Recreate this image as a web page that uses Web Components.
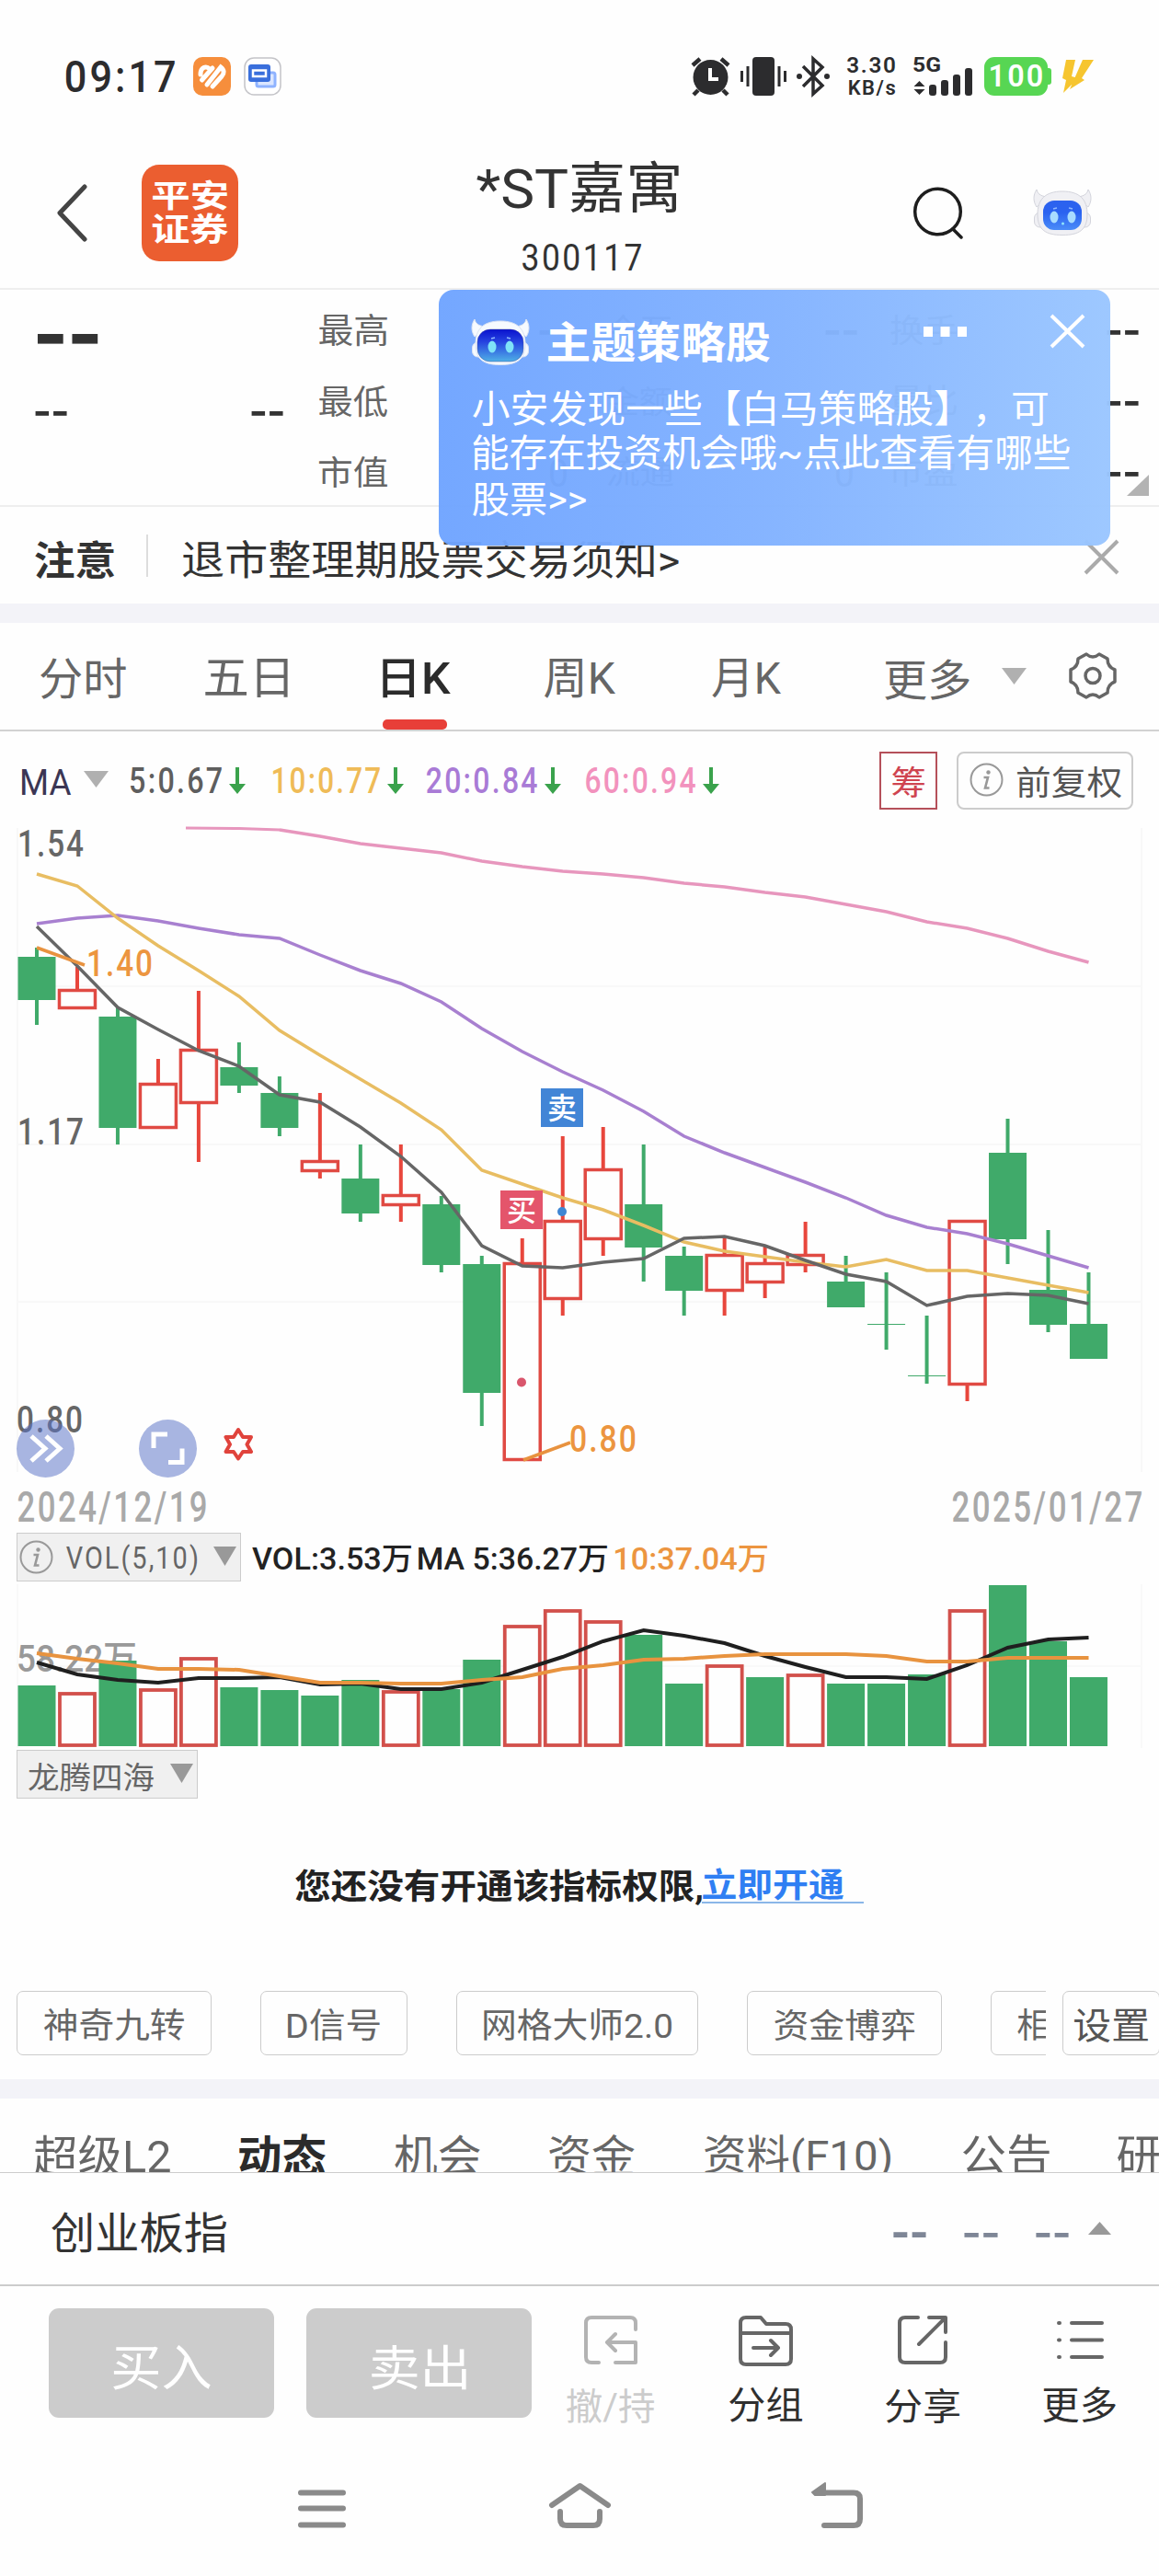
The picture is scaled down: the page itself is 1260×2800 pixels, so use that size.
<!DOCTYPE html>
<html lang="zh-CN">
<head>
<meta charset="utf-8">
<title>*ST嘉寓 300117</title>
<style>
  body {
    margin: 0;
    background: #fefefe;
    color: #333;
    font-family: Roboto, "Noto Sans CJK SC", sans-serif;
  }
</style>
</head>
<body>
<stock-page></stock-page>

<script>
// Base class: renders markup and styles into an open shadow root
class BaseElement extends HTMLElement {
  constructor() {
    super();
    this.attachShadow({ mode: 'open' });
  }

  connectedCallback() {
    this.shadowRoot.innerHTML = `
      <style>
        :host { display: block; box-sizing: border-box; }
        svg { display: block; flex: none; overflow: visible; }
        ${this.styles()}
      </style>
      ${this.markup()}
    `;
  }

  styles() { return ''; }
  markup() { return ''; }
}

// Text scaled so that its ink fills a box of w x h
const measureCtx = document.createElement('canvas').getContext('2d');

class FitText extends HTMLElement {
  constructor() {
    super();
    this.attachShadow({ mode: 'open' });
  }

  connectedCallback() {
    const w = Number(this.getAttribute('w'));
    const h = Number(this.getAttribute('h'));
    const cs = getComputedStyle(this);
    const text = this.textContent.trim();
    // Latin digits are set a little open
    const spacing = /^[\w:.,/()]+$/.test(text) && text.length > 2 ? 0.07 : 0;

    measureCtx.font = `${cs.fontWeight} 100px ${cs.fontFamily}`;
    measureCtx.letterSpacing = `${spacing * 100}px`;
    const m = measureCtx.measureText(text);
    const k = h / (m.actualBoundingBoxAscent + m.actualBoundingBoxDescent);
    const sx = w / ((m.actualBoundingBoxLeft + m.actualBoundingBoxRight) * k);
    const fa = m.fontBoundingBoxAscent * k;
    const fd = m.fontBoundingBoxDescent * k;
    const baseline = (h - fa - fd) / 2 + fa;
    const tx = m.actualBoundingBoxLeft * k * sx;
    const ty = m.actualBoundingBoxAscent * k - baseline;

    this.shadowRoot.innerHTML = `
      <style>
        :host { display: block; flex: none; width: ${w}px; height: ${h}px; }
        span {
          display: block;
          width: max-content;
          white-space: pre;
          font-size: ${100 * k}px;
          line-height: ${h}px;
          letter-spacing: ${spacing}em;
          transform-origin: 0 0;
          transform: translate(${tx}px, ${ty}px) scaleX(${sx});
        }
      </style>
      <span><slot></slot></span>
    `;
  }
}
customElements.define('fit-text', FitText);

// Shorthand for the markup of a fitted text
const fit = (text, w, h, style = '') => `<fit-text w="${w}" h="${h}" style="${style}">${text}</fit-text>`;

class DropArrow extends BaseElement {
  styles() { return ':host { flex: none; }'; }
  markup() {
    const w = this.getAttribute('w');
    const h = this.getAttribute('h');
    const d = this.hasAttribute('up') ? `M0 ${h}H${w}L${w / 2} 0Z` : `M0 0H${w}L${w / 2} ${h}Z`;
    return `<svg width="${w}" height="${h}"><path d="${d}" fill="${this.getAttribute('color') || '#b0b0b0'}"/></svg>`;
  }
}
customElements.define('drop-arrow', DropArrow);

class InfoIcon extends BaseElement {
  styles() { return ':host { flex: none; }'; }
  markup() {
    return `<svg width="37" height="37" viewBox="0 0 37 37" fill="none" stroke="#999">
      <circle cx="18.5" cy="18.5" r="17" stroke-width="2"/>
      <circle cx="20.5" cy="10.500" r="2.2" fill="#999" stroke="none"/>
      <path d="M15.500 16H20L17 27.500H21.500" stroke-width="2.600"/>
    </svg>`;
  }
}
customElements.define('info-icon', InfoIcon);

class BotIcon extends BaseElement {
  styles() { return ':host { flex: none; }'; }
  markup() {
    const dark = this.hasAttribute('dark');
    const face = dark
      ? '<rect x="6" y="11" width="50" height="35" rx="14" fill="url(#face)" stroke="#35408f" stroke-opacity=".4"/>'
      : '<rect x="10" y="12" width="42" height="32" rx="12" fill="url(#face)"/>';
    return `<svg width="62" height="50" viewBox="0 0 62 50">
      <defs><linearGradient id="face" x1="0" y1="0" x2="0" y2="1">
        <stop offset="0" stop-color="${dark ? '#0a12cf' : '#2c62ee'}"/>
        <stop offset=".4" stop-color="${dark ? '#2745e0' : '#2a62f0'}"/>
        <stop offset="1" stop-color="${dark ? '#4fb0e6' : '#4a8cf8'}"/>
      </linearGradient></defs>
      <g fill="${dark ? '#f6faff' : '#f0f0f4'}" stroke="${dark ? '#dbe3f2' : '#d3d4dc'}">
        <path d="M3 0C-1 6 -1 13 3 19L17 8C10 8 4 6 3 0ZM59 0C63 6 63 13 59 19L45 8C52 8 58 6 59 0Z"/>
        <rect x=".5" y="25" width="61" height="16" rx="6"/>
        <path d="M31 2C50 2 58 11 58 27C58 44 49 49.500 31 49.500S4 44 4 27C4 11 12 2 31 2Z"/>
      </g>
      ${face}
      <ellipse cx="22" cy="30" rx="4.500" ry="6.500" fill="${dark ? '#7fe3f8' : '#a8dcff'}"/>
      <ellipse cx="41" cy="30" rx="4.500" ry="6.500" fill="${dark ? '#7fe3f8' : '#a8dcff'}"/>
      <path d="M21 21l4-1M42 21l-4-1" stroke="#8fb7ff" stroke-width="1.500"/>
      ${dark ? '' : '<circle cx="31.500" cy="37" r="1.500" fill="#8fe4fb"/>'}
    </svg>`;
  }
}
customElements.define('bot-icon', BotIcon);

class StatusBar extends BaseElement {
  styles() {
    return `
      :host { display: flex; align-items: center; height: 166px; color: #2c2c2e; }
      .speed { margin-left: 19px; display: grid; gap: 7px; justify-items: end; font-weight: 600; }
      .battery {
        margin-left: 13px; width: 69px; height: 42px; border-radius: 11px; background: #57d653;
        display: flex; align-items: center; justify-content: center; color: #fff; font-weight: 600;
      }
      .nub { width: 4px; height: 18px; border-radius: 0 3px 3px 0; background: #57d653; }
    `;
  }
  markup() {
    return `
      ${fit('09:17', 118, 35, 'margin-left:72px;font-weight:500')}
      <svg style="margin-left:20px" width="41" height="42" viewBox="0 0 41 42">
        <rect width="41" height="42" rx="10" fill="#f68e3c"/>
        <g fill="none" stroke="#fff" stroke-width="5" stroke-linecap="round">
          <path d="M8 19C8 11 14 9 18 13M9.500 25L21 12M15 30L30 11C34 14 34 18 31 21L21 32"/>
        </g>
      </svg>
      <svg style="margin-left:14px" width="41" height="42" viewBox="0 0 41 42">
        <rect x="1" y="1" width="39" height="40" rx="10" fill="#fff" stroke="#c4c4c8" stroke-width="1.500"/>
        <rect x="14" y="17" width="20" height="15" rx="2" fill="#dbe6ff" stroke="#8fb3ff" stroke-width="3"/>
        <rect x="5" y="8" width="24" height="19" rx="3" fill="#3a6fdc"/>
        <path d="M10 14.500h14v6.500h-14z" fill="none" stroke="#fff" stroke-width="2.500"/>
      </svg>
      <svg style="margin-left:445px" width="43" height="42" viewBox="0 0 43 42">
        <circle cx="21.500" cy="22" r="19" fill="#2c2c2e"/>
        <path d="M2 9L10 2M41 9L33 2M8 36L3 41M35 36L40 41" stroke="#2c2c2e" stroke-width="4.500"/>
        <path d="M21 12V24H30" fill="none" stroke="#fff" stroke-width="4"/>
      </svg>
      <svg style="margin-left:11px" width="50" height="42" viewBox="0 0 50 42" stroke="#2c2c2e" stroke-width="3">
        <rect x="13" width="24" height="42" rx="4" fill="#2c2c2e" stroke="none"/>
        <path d="M1.500 15V27M8 10V32M48.500 15V27M42 10V32"/>
      </svg>
      <svg style="margin-left:11px" width="36" height="42" viewBox="0 0 36 42">
        <path d="M7 10L28 31L18 40V2L28 11L7 32" fill="none" stroke="#2c2c2e" stroke-width="3.500"/>
        <circle cx="3" cy="21" r="3" fill="#2c2c2e"/><circle cx="33" cy="21" r="3" fill="#2c2c2e"/>
      </svg>
      <div class="speed">${fit('3.30', 52, 18)}${fit('KB/s', 50, 17)}</div>
      <svg style="margin-left:20px" width="64" height="42" viewBox="0 0 64 42" fill="#2c2c2e">
        <text x="-1" y="16" font-size="22" font-weight="700" textLength="31" lengthAdjust="spacingAndGlyphs">5G</text>
        <path d="M6.500 26l6 6h-12zM6.500 41l6-6h-12z"/>
        <rect x="17" y="30" width="8" height="12" rx="3"/><rect x="30" y="25" width="8" height="17" rx="3"/>
        <rect x="43" y="19" width="8" height="23" rx="3"/><rect x="56" y="12" width="8" height="30" rx="3"/>
      </svg>
      <div class="battery">${fit('100', 56, 24)}</div><div class="nub"></div>
      <svg style="margin-left:12px" width="35" height="36" viewBox="0 0 35 36">
        <path d="M4 0H14L10 18L17 20L1 36L4 22L0 20ZM22 0H34L21 20L24 22L8 32L15 16Z" fill="#f6c52f"/>
      </svg>
    `;
  }
}
customElements.define('status-bar', StatusBar);

class StockHeader extends BaseElement {
  styles() {
    return `
      :host { display: flex; align-items: center; height: 149px; padding-bottom: 17px; border-bottom: 2px solid #eee; }
      .logo {
        margin-left: 60px; width: 105px; height: 105px; border-radius: 19px; background: #eb5e30; color: #fff;
        display: grid; align-content: center; justify-items: center; gap: 4px; font-weight: 700; flex: none;
      }
      .title { margin: 6px 0 0 259px; width: 220px; display: grid; gap: 32px; }
    `;
  }
  markup() {
    return `
      <svg style="margin-left:62px" width="32" height="61" viewBox="0 0 32 61">
        <path d="M30 2L3 30.500L30 59" fill="none" stroke="#444" stroke-width="5" stroke-linecap="round" stroke-linejoin="round"/>
      </svg>
      <div class="logo">${fit('平安', 81, 33)}${fit('证券', 82, 33)}</div>
      <div class="title">
        ${fit('*ST嘉寓', 220, 57)}
        ${fit('300117', 129, 30, 'margin-left:50px')}
      </div>
      <svg style="margin-left:255px" width="53" height="57" viewBox="0 0 53 57" fill="none" stroke="#1e1e1e" stroke-width="3.500">
        <circle cx="26.500" cy="27" r="24.800"/><path d="M43 46L52 55" stroke-linecap="round"/>
      </svg>
      <bot-icon style="margin-left:78px"></bot-icon>
    `;
  }
}
customElements.define('stock-header', StockHeader);

// Blue hint card, floats over the quote panel
class HintPopup extends BaseElement {
  styles() {
    return `
      :host {
        width: 730px; height: 278px; padding: 32px 27px 0 36px; border-radius: 16px; color: #fff;
        background: linear-gradient(90deg, #6fa4fff6, #82b2fff6 50%, #9ac6fff6);
      }
      header { display: flex; align-items: flex-start; height: 77px; }
    `;
  }
  markup() {
    return `
      <header>
        <bot-icon dark></bot-icon>
        <slot name="title"></slot>
        <svg style="margin:8px 0 0 167px" width="47" height="11" fill="#fff"><path d="M0 0h10v11h-10zM18.500 0h10v11h-10zM37 0h10v11h-10z"/></svg>
        <svg style="margin:-5px 0 0 91px" width="37" height="36" stroke="#fff" stroke-width="4"><path d="M1 1L36 35M36 1L1 35"/></svg>
      </header>
      <slot></slot>
    `;
  }
}
customElements.define('hint-popup', HintPopup);

class QuotePanel extends BaseElement {
  styles() {
    return `
      :host { position: relative; height: 236px; padding-top: 6px; border-bottom: 2px solid #eee; }
      .grid {
        display: grid; align-items: center; color: #666;
        grid-template: repeat(3, 77px) / 347px 239px 74px 237px 71px 235px 46px;
      }
      .left { display: flex; font-family: "Noto Sans CJK SC", sans-serif; color: #333; font-weight: 700; }
      .dash { font-family: "Noto Sans CJK SC", sans-serif; color: #333; font-weight: 700; }
      .corner { position: absolute; left: 1225px; top: 201px; }
      hint-popup { position: absolute; left: 477px; top: 0; z-index: 1; }
    `;
  }
  markup() {
    const dash = `<div class="dash">${fit('--', 35, 5, 'margin-top:3px')}</div>`;
    return `
      <div class="grid">
        <div class="left">${fit('--', 67, 11, 'margin:18px 0 0 40px')}</div>
        ${fit('最高', 74, 35)}${dash}${fit('今开', 70, 33)}${dash}${fit('换手', 72, 33)}${dash}
        <div class="left">${fit('--', 35, 5, 'margin:26px 0 0 38px')}${fit('--', 35, 5, 'margin:26px 0 0 200px')}</div>
        ${fit('最低', 74, 35)}<i></i>${fit('金额', 70, 33)}<i></i>${fit('量比', 72, 33)}${dash}
        <i></i>
        ${fit('市值', 74, 35)}${fit('0', 18, 31, 'margin-left:12px')}${fit('流通', 72, 33)}${fit('0', 18, 31, 'margin-left:12px')}${fit('市盈', 72, 33)}${dash}
      </div>
      <svg class="corner" width="24" height="23"><path d="M24 0V23H0Z" fill="#b3b3b3"/></svg>
      <hint-popup>
        ${fit('主题策略股', 241, 45, 'margin:2px 0 0 21px;font-weight:700').replace('<fit-text', '<fit-text slot="title"')}
        ${fit('小安发现一些【白马策略股】&#8203;，可', 625, 40, 'margin-left:1px')}
        ${fit('能存在投资机会哦~点此查看有哪些', 649, 39, 'margin:9px 0 0 1px')}
        ${fit('股票&gt;&gt;', 123, 36, 'margin:13px 0 0 1px')}
      </hint-popup>
    `;
  }
}
customElements.define('quote-panel', QuotePanel);

class NoticeBar extends BaseElement {
  styles() {
    return `
      :host { display: flex; align-items: center; height: 105px; padding-top: 8px; color: #333; }
      i { margin: -8px 0 0 35px; width: 2px; height: 46px; background: #ddd; }
    `;
  }
  markup() {
    return `
      ${fit('注意', 86, 42, 'margin-left:38px;font-weight:700')}
      <i></i>
      ${fit('退市整理期股票交易须知&gt;', 539, 42, 'margin-left:38px')}
      <svg style="margin-left:441px;margin-top:-4px" width="37" height="37" stroke="#aaa" stroke-width="4"><path d="M1 1L36 36M36 1L1 36"/></svg>
    `;
  }
}
customElements.define('notice-bar', NoticeBar);

class PeriodTabs extends BaseElement {
  styles() {
    return `
      :host { display: flex; height: 118px; border-bottom: 2px solid #d2d2d2; color: #666; }
      .tab { display: grid; grid-template-rows: 105px 11px; align-items: center; }
      .tab > * { margin-top: 17px; }
      .tab.on { color: #2b2b2b; font-weight: 500; }
      .tab.on::after { content: ''; width: 70px; height: 11px; border-radius: 5px; background: #e83f38; }
    `;
  }
  markup() {
    const tabs = [
      ['分时', 93, 44, 44], ['五日', 90, 42, 86], ['日K', 74, 42, 103],
      ['周K', 77, 42, 102], ['月K', 75, 42, 105], ['更多', 92, 44, 113]
    ];
    return `
      ${tabs.map(([t, w, h, ml]) => `<div class="tab ${t === '日K' ? 'on' : ''}" style="margin-left:${ml}px">${fit(t, w, h)}</div>`).join('')}
      <drop-arrow w="27" h="18" style="margin:49px 0 0 35px"></drop-arrow>
      <svg style="margin:32px 0 0 46px" width="52" height="51" viewBox="0 0 52 51" fill="none" stroke="#666" stroke-width="3.500" stroke-linejoin="round">
        <path d="M19 2Q26 8 33 2L42 7Q42 16 50 19V32Q42 35 42 44L33 49Q26 43 19 49L10 44Q10 35 2 32V19Q10 16 10 7Z"/>
        <circle cx="26" cy="25.500" r="8"/>
      </svg>
    `;
  }
}
customElements.define('period-tabs', PeriodTabs);

class MaLegend extends BaseElement {
  styles() {
    return `
      :host { display: flex; align-items: center; height: 100px; padding-top: 6px; font-weight: 500; }
      .chip { margin-left: 174px; width: 63px; height: 63px; box-sizing: border-box; border: 2px solid #b5505a; color: #cf4450; display: grid; place-content: center; }
      .chip fit-text { margin-top: 5px; }
      .adjust {
        margin-left: 21px; width: 192px; height: 63px; box-sizing: border-box; border: 2px solid #ccc; border-radius: 8px;
        display: flex; align-items: center; padding: 4px 0 0 12px; color: #555; font-weight: 400;
      }
      info-icon { margin-top: -6px; }
    `;
  }
  markup() {
    const arrow = `<svg style="margin-left:8px" width="18" height="29" viewBox="0 0 18 29"><path d="M7 0h4v18h7L9 29L0 18h7z" fill="#3aa24c"/></svg>`;
    return `
      ${fit('MA', 53, 28, 'margin:3px 0 0 24px;color:#3b3654;font-weight:400')}
      <drop-arrow w="27" h="18" style="margin:-2px 0 0 14px"></drop-arrow>
      ${fit('5:0.67', 99, 29, 'margin-left:24px;color:#5e5e5e')}${arrow}
      ${fit('10:0.77', 116, 29, 'margin-left:30px;color:#efbb57')}${arrow}
      ${fit('20:0.84', 120, 29, 'margin-left:25px;color:#a97bd6')}${arrow}
      ${fit('60:0.94', 119, 29, 'margin-left:27px;color:#f292bd')}${arrow}
      <div class="chip">${fit('筹', 35, 35, 'font-weight:400')}</div>
      <div class="adjust"><info-icon></info-icon>${fit('前复权', 113, 35, 'margin-left:15px')}</div>
    `;
  }
}
customElements.define('ma-legend', MaLegend);

// direction, high, body top, body bottom, low (chart space)
const CANDLES = [
  ['g', 1030, 1040, 1087, 1114], ['r', 1051, 1075, 1097, 1097], ['g', 1095, 1105, 1226, 1244],
  ['r', 1151, 1177, 1227, 1227], ['r', 1077, 1140, 1200, 1263], ['g', 1133, 1160, 1180, 1188],
  ['g', 1170, 1188, 1226, 1235], ['r', 1188, 1261, 1274, 1281], ['g', 1244, 1281, 1319, 1328],
  ['r', 1244, 1298, 1311, 1328], ['g', 1300, 1309, 1375, 1383], ['g', 1365, 1374, 1514, 1550],
  ['r', 1346, 1372, 1588, 1588], ['r', 1235, 1326, 1413, 1430], ['r', 1225, 1270, 1348, 1365],
  ['g', 1244, 1309, 1356, 1393], ['g', 1355, 1365, 1403, 1430], ['r', 1346, 1363, 1404, 1430],
  ['r', 1355, 1372, 1395, 1411], ['r', 1328, 1363, 1376, 1383], ['g', 1365, 1393, 1421, 1421],
  ['g', 1383, 1439, 1440, 1467], ['g', 1430, 1495, 1496, 1504], ['r', 1326, 1326, 1506, 1523],
  ['g', 1216, 1253, 1347, 1374], ['g', 1337, 1402, 1440, 1448], ['g', 1383, 1439, 1477, 1477]
];
const MA5 = [1007, 1050, 1095, 1119, 1142, 1159, 1190, 1198, 1225, 1257, 1296, 1354, 1376, 1378, 1372, 1368, 1346, 1344, 1354, 1370, 1385, 1393, 1419, 1409, 1406, 1408, 1417];
const MA10 = [950, 963, 998, 1028, 1055, 1083, 1120, 1147, 1173, 1199, 1228, 1272, 1287, 1302, 1315, 1332, 1350, 1360, 1366, 1372, 1377, 1369, 1381, 1381, 1389, 1397, 1405];
const MA20 = [1004, 998, 995, 1001, 1009, 1016, 1020, 1038, 1055, 1069, 1089, 1118, 1143, 1165, 1185, 1208, 1235, 1253, 1269, 1285, 1302, 1321, 1334, 1341, 1352, 1365, 1378];
const MA60 = [902, 909, 917, 922, 927, 936, 942, 947, 950, 954, 960, 964, 970, 975, 983, 991, 1002, 1009, 1020, 1034, 1046];
const VOLUMES = [1832, 1839, 1805, 1835, 1801, 1834, 1837, 1843, 1826, 1837, 1836, 1804, 1766, 1749, 1761, 1777, 1830, 1809, 1823, 1819, 1830, 1830, 1820, 1749, 1723, 1784, 1823];
const VOLUME_DIRS = 'grgrrggggrggrrrggrgrgggrggg';
const VOL5 = [1807, 1820, 1826, 1829, 1824, 1824, 1823, 1831, 1830, 1836, 1836, 1829, 1815, 1801, 1784, 1772, 1778, 1786, 1800, 1812, 1823, 1823, 1825, 1810, 1791, 1782, 1780];
const VOL10 = [1797, 1803, 1808, 1814, 1814, 1815, 1822, 1829, 1829, 1830, 1830, 1826, 1823, 1814, 1810, 1804, 1803, 1800, 1798, 1798, 1798, 1800, 1806, 1806, 1802, 1802, 1802];

const GREEN = '#40aa6a';
const RED = '#e04a43';
const colX = (i) => 40 + i * 43.98;
const poly = (ys, color, width, from = 0) =>
  `<polyline points="${ys.map((y, i) => `${colX(i + from).toFixed(1)},${y}`).join(' ')}" fill="none" stroke="${color}" stroke-width="${width}"/>`;

class CandleChart extends BaseElement {
  styles() {
    return `text { font-size: 41px; letter-spacing: .06em; font-weight: 500; }`;
  }

  candle([dir, high, top, bottom, low], i) {
    const x = colX(i);
    if (dir === 'g') {
      return `<path d="M${x} ${high}V${low}" stroke="${GREEN}" stroke-width="4"/>
        <rect x="${x - 20.5}" y="${top}" width="41" height="${bottom - top}" fill="${GREEN}"/>`;
    }
    return `<path d="M${x} ${high}V${top}M${x} ${bottom}V${low}" stroke="#e8463c" stroke-width="4"/>
      <rect x="${x - 19.5}" y="${top + 1.5}" width="39" height="${bottom - top - 3}" fill="none" stroke="${RED}" stroke-width="3.500"/>`;
  }

  label(text, x, y, width, color) {
    return `<text x="${x}" y="${y}" fill="${color}" textLength="${width}" lengthAdjust="spacingAndGlyphs">${text}</text>`;
  }

  badge(text, x, y, color) {
    return `<rect x="${x}" y="${y}" width="46" height="42" fill="${color}"/>
      <text x="${x + 7}" y="${y + 33}" style="font-size:32px;letter-spacing:0" fill="#fff">${text}</text>`;
  }

  markup() {
    return `
      <svg width="1260" height="710" viewBox="0 895 1260 710">
        <path d="M19 900V1600M1241 900V1600M19 1072H1241M19 1244H1241M19 1415H1241" stroke="#f8f8f8" stroke-width="2" fill="none"/>
        ${CANDLES.map((c, i) => this.candle(c, i)).join('')}
        <path d="M202 900L260 900.500L304 902" fill="none" stroke="#e796bd" stroke-width="3"/>
        ${poly(MA60, '#e796bd', 3.5, 6)}
        ${poly(MA20, '#a880d0', 3.5)}
        ${poly(MA10, '#e8bd62', 3.5)}
        ${poly(MA5, '#666', 3.5)}
        <path d="M40 1030L92 1049M569 1587L620 1568" stroke="#e8923f" stroke-width="3.500"/>
        ${this.label('1.54', 19, 931, 74, '#666')}
        ${this.label('1.17', 19, 1244, 74, '#666')}
        ${this.label('0.80', 18, 1557, 74, '#666')}
        ${this.label('1.40', 94, 1061, 74, '#ec9540')}
        ${this.label('0.80', 619, 1578, 75, '#ec9540')}
        ${this.badge('卖', 588, 1183, '#4285d6')}
        ${this.badge('买', 544, 1294, '#e4556b')}
        <circle cx="611" cy="1317" r="5" fill="#3f86d3"/>
        <circle cx="567" cy="1502.500" r="5" fill="#d9566c"/>
        <g fill="#5a73c6" fill-opacity=".53"><circle cx="49.500" cy="1574.500" r="31.500"/><circle cx="182.500" cy="1574.500" r="31.500"/></g>
        <g fill="none" stroke="#fff" stroke-width="5">
          <path d="M34 1561L49 1574.500L34 1588M50 1561L65 1574.500L50 1588"/>
          <path d="M167 1574V1559H182M183 1589.500H198V1574.500"/>
        </g>
        <path d="M259 1554L264 1562H273L268.500 1570L273 1578H264L259 1585.500L254 1578H245.500L250 1570L245.500 1562H254Z" fill="none" stroke="#e0433c" stroke-width="4" stroke-linejoin="round"/>
      </svg>
    `;
  }
}
customElements.define('candle-chart', CandleChart);

class DateAxis extends BaseElement {
  styles() {
    return ':host { display: flex; justify-content: space-between; height: 55px; padding: 16px 19px 0 20px; color: #a9a9a9; font-weight: 500; }';
  }
  markup() {
    return fit('2024/12/19', 204, 36) + fit('2025/01/27', 205, 36);
  }
}
customElements.define('date-axis', DateAxis);

// Grey select button above each sub chart
class SelectButton extends BaseElement {
  styles() {
    return `
      :host {
        display: flex; align-items: center; height: 53px; flex: none;
        background: #f0f0f0; border: 1.500px solid #ccc; color: #666;
      }
    `;
  }
  markup() { return '<slot></slot>'; }
}
customElements.define('select-button', SelectButton);

class VolumePanel extends BaseElement {
  styles() {
    return `
      header { display: flex; align-items: center; height: 60px; padding: 5px 0 0 18px; box-sizing: border-box; color: #222; font-weight: 500; }
      select-button { width: 244px; font-weight: 400; }
    `;
  }

  bar(y, i) {
    const x = colX(i);
    if (VOLUME_DIRS[i] === 'g') {
      return `<rect x="${x - 20.5}" y="${y}" width="41" height="${1898 - y}" fill="${GREEN}"/>`;
    }
    return `<rect x="${x - 19}" y="${y + 2}" width="38" height="${1895 - y}" fill="#fefefe" stroke="#d2504b" stroke-width="3.800"/>`;
  }

  markup() {
    return `
      <header>
        <select-button>
          <info-icon style="margin-left:2px"></info-icon>
          ${fit('VOL(5,10)', 142, 34, 'margin:6px 0 0 14px')}
          <drop-arrow w="25" h="21" color="#999" style="margin:-2px 0 0 18px"></drop-arrow>
        </select-button>
        ${fit('VOL:3.53万', 173, 29, 'margin:3px 0 0 12px')}
        ${fit('MA 5:36.27万', 205, 29, 'margin:3px 0 0 8px')}
        ${fit('10:37.04万', 165, 29, 'margin:3px 0 0 9px;color:#ec9540')}
      </header>
      <svg width="1260" height="180" viewBox="0 1720 1260 180">
        <path d="M19 1722V1900M1241 1722V1900M19 1811H1241" stroke="#f9f9f9" stroke-width="2"/>
        <text x="18" y="1817" font-size="40" font-weight="500" fill="#999" textLength="131" lengthAdjust="spacingAndGlyphs">58.22万</text>
        ${VOLUMES.map((y, i) => this.bar(y, i)).join('')}
        ${poly(VOL5, '#1f1f1f', 4)}
        ${poly(VOL10, '#e8933f', 4)}
      </svg>
    `;
  }
}
customElements.define('volume-panel', VolumePanel);

class LockedIndicator extends BaseElement {
  styles() {
    return `
      :host { height: 264px; padding: 2px 0 0 18px; }
      select-button { width: 197px; box-sizing: border-box; }
      p { display: flex; margin: 77px 0 0 303px; color: #222; font-weight: 700; }
      a { display: block; width: 176px; height: 35px; border-bottom: 2px solid #8ab6e8; color: #2f7ff3; }
    `;
  }
  markup() {
    return `
      <select-button>
        ${fit('龙腾四海', 136, 31, 'margin:5px 0 0 12px')}
        <drop-arrow w="25" h="21" color="#999" style="margin:-3px 0 0 18px"></drop-arrow>
      </select-button>
      <p>${fit('您还没有开通该指标权限,', 442, 39)}<a>${fit('立即开通', 153, 35, 'margin-left:1px')}</a></p>
    `;
  }
}
customElements.define('locked-indicator', LockedIndicator);

class ChipRow extends BaseElement {
  styles() {
    return `
      :host { display: flex; height: 96px; padding-left: 18px; color: #666; }
      .list { display: flex; gap: 53px; width: 1119px; overflow: hidden; flex: none; }
      .chip {
        height: 70px; padding-top: 5px; box-sizing: border-box; border: 1.500px solid #ccc; border-radius: 7px; flex: none;
        display: flex; align-items: center; justify-content: center;
      }
      .more { justify-content: flex-start; padding-left: 28px; }
      .set { width: 106px; margin-left: 18px; color: #555; }
    `;
  }
  markup() {
    return `
      <div class="list">
        <div class="chip" style="width:212px">${fit('神奇九转', 152, 35)}</div>
        <div class="chip" style="width:160px">${fit('D信号', 100, 35)}</div>
        <div class="chip" style="width:263px">${fit('网格大师2.0', 204, 35)}</div>
        <div class="chip" style="width:212px">${fit('资金博弈', 152, 35)}</div>
        <div class="chip more" style="width:212px">${fit('相', 35, 35)}</div>
      </div>
      <div class="chip set">${fit('设置', 80, 37)}</div>
    `;
  }
}
customElements.define('chip-row', ChipRow);

class InfoTabs extends BaseElement {
  styles() {
    return ':host { display: flex; height: 81px; padding: 40px 0 0 37px; overflow: hidden; border-bottom: 1.500px solid #ccc; color: #666; } .on { color: #2b2b2b; font-weight: 700; }';
  }
  markup() {
    return `
      ${fit('超级L2', 148, 45)}
      <div class="on">${fit('动态', 94, 46, 'margin:-1px 0 0 75px')}</div>
      ${fit('机会', 93, 45, 'margin-left:75px')}
      ${fit('资金', 93, 45, 'margin-left:75px')}
      ${fit('资料(F10)', 202, 49, 'margin-left:76px')}
      ${fit('公告', 94, 45, 'margin-left:79px')}
      ${fit('研', 45, 43, 'margin:2px 0 0 74px')}
    `;
  }
}
customElements.define('info-tabs', InfoTabs);

class IndexBar extends BaseElement {
  styles() {
    return `
      :host { display: flex; align-items: center; height: 123px; padding: 6px 0 0 56px; border-bottom: 2px solid #ccc; }
      .dash { display: flex; gap: 41px; margin: 8px 0 0 725px; font-family: "Noto Sans CJK SC", sans-serif; font-weight: 700; color: #7e8696; }
    `;
  }
  markup() {
    return `
      ${fit('创业板指', 190, 44)}
      <div class="dash">${fit('--', 36, 6)}${fit('--', 37, 5)}${fit('--', 36, 5)}</div>
      <drop-arrow up w="25" h="14" color="#999" style="margin:-7px 0 0 21px"></drop-arrow>
    `;
  }
}
customElements.define('index-bar', IndexBar);

class TradeBar extends BaseElement {
  styles() {
    return `
      :host { display: flex; height: 180px; padding: 24px 0 0 53px; color: #2f2f2f; }
      button {
        width: 245px; height: 119px; margin: 0 35px 0 0; padding: 9px 0 0; border: 0; border-radius: 11px;
        background: #ccc; color: #fff; font: inherit; display: grid; place-content: center; flex: none;
      }
      .action { height: 125px; display: flex; flex-direction: column; align-items: center; justify-content: space-between; flex: none; }
      svg { margin-top: 8px; fill: none; stroke: #666; stroke-width: 4; stroke-linecap: round; stroke-linejoin: round; }
      .off { color: #ccc; }
      .off svg { stroke: #b3b3b3; }
    `;
  }
  markup() {
    return `
      <button>${fit('买入', 106, 49)}</button>
      <button>${fit('卖出', 103, 49)}</button>
      <div class="action off" style="margin-left:3px">
        <svg width="58" height="53" viewBox="0 0 58 53">
          <path d="M56 15V8Q56 2 50 2H8Q2 2 2 8V45Q2 51 8 51H16M34 51H56V29H26M34 20L25 29L34 38"/>
        </svg>
        ${fit('撤/持', 95, 38)}
      </div>
      <div class="action" style="margin-left:82px">
        <svg width="59" height="55" viewBox="0 0 59 55">
          <path d="M2 19V8Q2 2 8 2H24L30 9H51Q57 9 57 15V47Q57 53 51 53H8Q2 53 2 47V19H57M16 35H43M35 27L43 35L35 43"/>
        </svg>
        ${fit('分组', 79, 38)}
      </div>
      <div class="action" style="margin-left:91px">
        <svg width="54" height="53" viewBox="0 0 54 53">
          <path d="M22 2H8Q2 2 2 8V45Q2 51 8 51H46Q52 51 52 45V29M34 2H52V18M51 3L23 31"/>
        </svg>
        ${fit('分享', 80, 38)}
      </div>
      <div class="action" style="margin-left:91px">
        <svg style="margin-top:13px" width="52" height="43" viewBox="0 0 52 43">
          <path d="M3 3H4M17 3H50M3 21.500H4M17 21.500H50M3 40H4M17 40H50"/>
        </svg>
        ${fit('更多', 79, 38)}
      </div>
    `;
  }
}
customElements.define('trade-bar', TradeBar);

class NavBar extends BaseElement {
  styles() {
    return `
      :host { display: flex; height: 135px; padding: 33px 0 0 324px; }
      svg { fill: none; stroke: #8a8a8a; stroke-width: 6; stroke-linecap: round; stroke-linejoin: round; }
    `;
  }
  markup() {
    return `
      <svg width="52" height="50"><path d="M3 11.500H49M3 28.500H49M3 46.500H49"/></svg>
      <svg style="margin-left:221px" width="67" height="50"><path d="M3 25L33.500 4L64 25M12 32V40Q12 47 19 47H48Q55 47 55 40V32"/></svg>
      <svg style="margin-left:218px" width="56" height="50"><path d="M14 47H46Q53 47 53 40V18Q53 11.500 46 11.500H5"/><path d="M1 11L15 1V14H4Z" fill="#8a8a8a" stroke-width="2"/></svg>
    `;
  }
}
customElements.define('nav-bar', NavBar);

class StockPage extends BaseElement {
  styles() {
    return `
      :host { width: 1260px; height: 2800px; overflow: hidden; }
      .band { height: 21px; background: #f3f3f8; }
    `;
  }
  markup() {
    return `
      <status-bar></status-bar>
      <stock-header></stock-header>
      <quote-panel></quote-panel>
      <notice-bar></notice-bar>
      <div class="band"></div>
      <period-tabs></period-tabs>
      <ma-legend></ma-legend>
      <candle-chart></candle-chart>
      <date-axis></date-axis>
      <volume-panel></volume-panel>
      <locked-indicator></locked-indicator>
      <chip-row></chip-row>
      <div class="band"></div>
      <info-tabs></info-tabs>
      <index-bar></index-bar>
      <trade-bar></trade-bar>
      <nav-bar></nav-bar>
    `;
  }
}
customElements.define('stock-page', StockPage);
</script>
</body>
</html>
